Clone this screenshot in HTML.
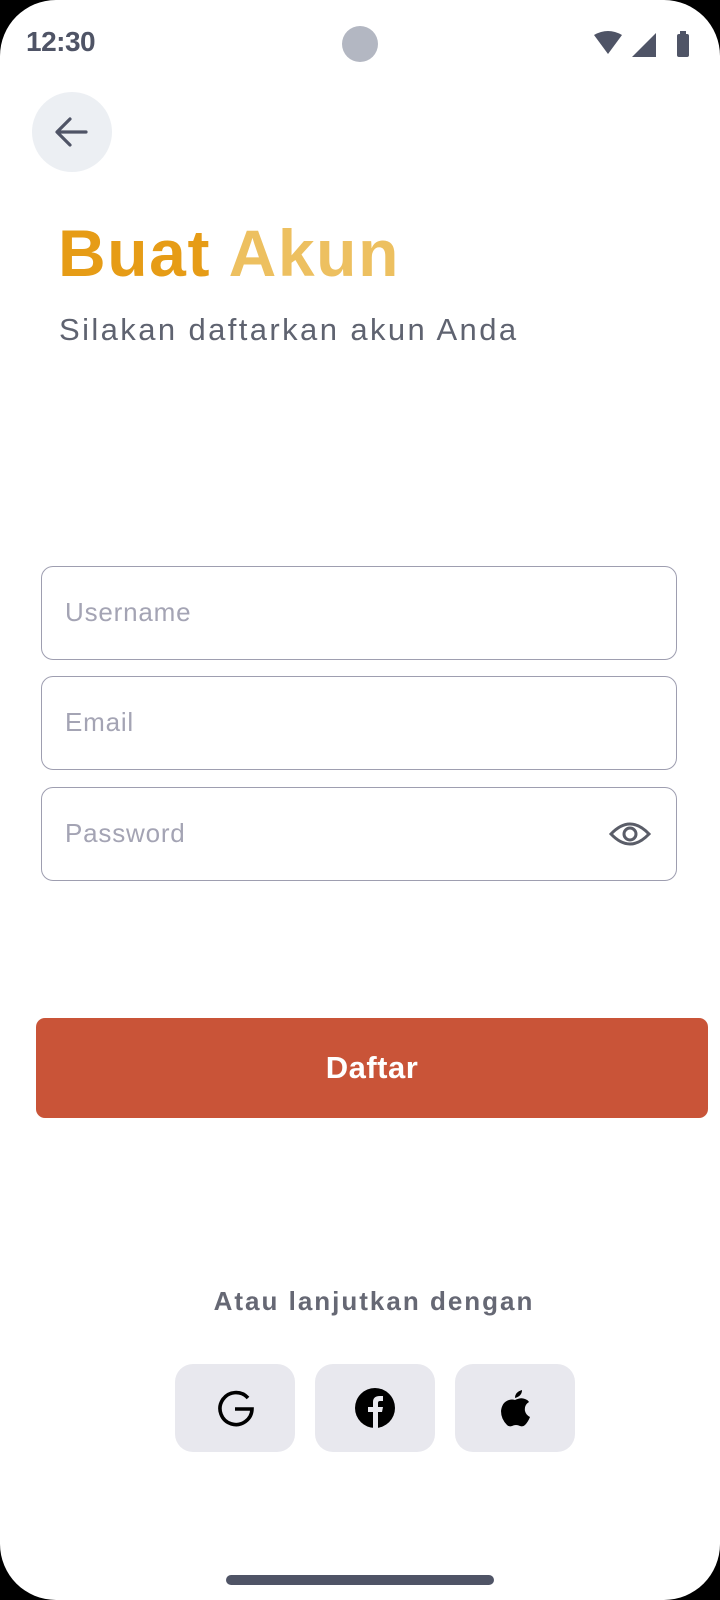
<!DOCTYPE html>
<html><head><meta charset="utf-8"><style>
*{margin:0;padding:0;box-sizing:border-box}
html,body{width:720px;height:1600px;background:#000;overflow:hidden;font-family:"Liberation Sans",sans-serif}
.scr{position:absolute;left:0;top:0;width:720px;height:1600px;background:#fff;border-radius:56px}
.abs{position:absolute}
.inp{position:absolute;left:41px;width:636px;height:94px;border:1.8px solid #9e9eb0;border-radius:12px;font-size:26px;color:#a4a4b4;padding-left:23px;line-height:91px;letter-spacing:0.8px}
.soc{position:absolute;top:1364px;width:120px;height:88px;background:#e8e8ee;border-radius:18px;display:flex;align-items:center;justify-content:center}
</style></head><body>
<div class="scr">
<div class="abs" style="left:26px;top:26px;font-size:28px;font-weight:bold;color:#4f5466;letter-spacing:-0.5px">12:30</div>
<div class="abs" style="left:342px;top:26px;width:36px;height:36px;border-radius:50%;background:#b3b7c2"></div>
<svg class="abs" style="left:592px;top:30px" width="100" height="30" viewBox="0 0 100 30">
<path d="M2 5 Q16 -3 30 5 L16 24 Z" fill="#4f5466"/>
<path d="M40 27 L64 3 L64 27 Z" fill="#4f5466"/>
<rect x="85" y="4" width="12" height="23" rx="2" fill="#4f5466"/><rect x="88" y="1" width="6" height="4" fill="#4f5466"/>
</svg>
<div class="abs" style="left:32px;top:92px;width:80px;height:80px;border-radius:50%;background:#eceff3"></div>
<svg class="abs" style="left:52px;top:112px" width="40" height="40" viewBox="0 0 40 40"><path d="M34 20 H6 M18 7 L5 20 L18 33" stroke="#4f5466" stroke-width="3.2" fill="none" stroke-linecap="round" stroke-linejoin="round"/></svg>
<div class="abs" style="left:58px;top:215px;font-size:66px;font-weight:bold;letter-spacing:1.6px;line-height:76px"><span style="color:#e69c16">Buat</span> <span style="color:#edc060">Akun</span></div>
<div class="abs" style="left:59px;top:310px;font-size:31px;color:#5f6370;line-height:40px;letter-spacing:2.4px">Silakan daftarkan akun Anda</div>
<div class="inp" style="top:566px">Username</div>
<div class="inp" style="top:676px">Email</div>
<div class="inp" style="top:787px">Password</div>
<svg class="abs" style="left:609px;top:818px" width="42" height="32" viewBox="0 0 42 32"><path d="M2 16 Q21 -4 40 16 Q21 36 2 16 Z" stroke="#5a5d68" stroke-width="3" fill="none"/><circle cx="21" cy="16" r="6" stroke="#5a5d68" stroke-width="3" fill="none"/></svg>
<div class="abs" style="left:36px;top:1018px;width:672px;height:100px;background:#c95438;border-radius:9px;color:#fff;font-size:31px;font-weight:bold;text-align:center;line-height:100px;letter-spacing:0.5px">Daftar</div>
<div class="abs" style="left:0;width:748px;top:1286px;text-align:center;font-size:26px;font-weight:bold;color:#666874;letter-spacing:2px">Atau lanjutkan dengan</div>
<div class="soc" style="left:175px"><svg width="40" height="40" viewBox="0 0 40 40"><path d="M33 10 A16 16 0 1 0 37 21 H20" stroke="#000" stroke-width="3.6" fill="none"/></svg></div>
<div class="soc" style="left:315px"><svg width="42" height="42" viewBox="0 0 42 42"><circle cx="21" cy="21" r="20" fill="#000"/><path d="M19 41 V25 H14 V20 H19 V15 Q19 9 26 9 H29 V14 H26 Q24 14 24 16 V20 H29 L28 25 H24 V41 Z" fill="#e8e8ee"/></svg></div>
<div class="soc" style="left:455px"><svg width="36" height="40" viewBox="0 0 36 40"><path d="M18 12 Q24 9 28 11 Q31 12 32 14 Q27 17 28 23 Q29 27 33 29 Q31 34 28 37 Q26 39 23 38 Q19 36 15 38 Q12 39 10 37 Q4 31 4 23 Q5 14 12 12 Q15 11 18 12 Z M18 10 Q18 4 25 2 Q25 8 18 10 Z" fill="#000"/></svg></div>
<div class="abs" style="left:226px;top:1575px;width:268px;height:10px;border-radius:5px;background:#4f5466"></div>
</div>
</body></html>
